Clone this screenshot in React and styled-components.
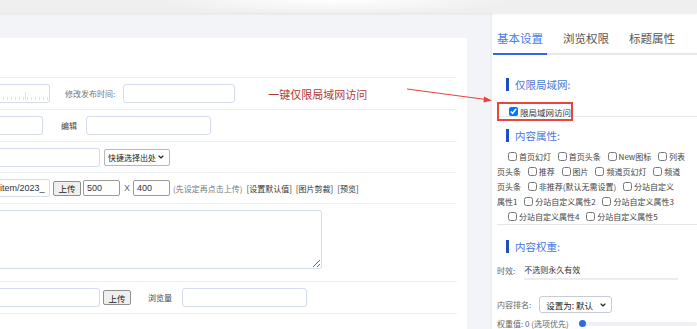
import React from "react";
import styled, { createGlobalStyle } from "styled-components";
import { ChevronDown } from "lucide-react";

const GlobalStyle = createGlobalStyle`
  html, body { margin: 0; padding: 0; }
  body {
    width: 697px;
    height: 329px;
    overflow: hidden;
    background: #f3f4f8;
    font-family: "Liberation Sans", "Noto Sans CJK SC", sans-serif;
    color: #333;
  }
`;

const Page = styled.div`
  position: relative;
  height: 329px;
  display: flex;
  flex-direction: column;
`;

const TopBar = styled.div`
  height: 13px;
  flex-shrink: 0;
  background: radial-gradient(ellipse 180px 14px at 48% 0%, #ffffff 0%, #f8f8f8 45%, #efefef 100%);
  box-shadow: 0 1px 2px rgba(0, 0, 0, 0.08);
  position: relative;
  z-index: 1;
`;

const Body = styled.div`
  display: flex;
  flex: 1;
  min-height: 0;
`;

const LeftCol = styled.div`
  width: 467px;
  flex-shrink: 0;
  padding-top: 25px;
  margin-right: 25px;
`;

const Panel = styled.div`
  background: #fff;
  height: 100%;
  padding: 39px 10px 0 0;
  box-sizing: border-box;
`;

const Row = styled.div`
  display: flex;
  align-items: ${(p) => (p.top ? "flex-start" : "center")};
  height: ${(p) => p.h}px;
  padding-top: ${(p) => (p.top ? 6 : 0)}px;
  border-top: 1px solid #eef0f4;
  border-bottom: ${(p) => (p.last ? "1px solid #eef0f4" : "none")};
  box-sizing: border-box;
`;

const Input = styled.div`
  width: ${(p) => p.w}px;
  height: ${(p) => p.h || 19}px;
  flex-shrink: 0;
  margin-left: ${(p) => p.ml || 0}px;
  border: 1px solid #d6dcee;
  border-left: ${(p) => (p.cut ? "none" : "1px solid #d6dcee")};
  border-radius: ${(p) => (p.cut ? "0 3px 3px 0" : "3px")};
  box-sizing: border-box;
  background: #fff;
  font-size: 9px;
  color: #333;
  display: flex;
  align-items: center;
  overflow: hidden;
  white-space: nowrap;
`;

const DateInput = styled(Input)`
  background-image:
    linear-gradient(#e2e6f2, #e2e6f2),
    repeating-linear-gradient(90deg, transparent 0 3px, #dfe3ef 3px 4px);
  background-size: 1px 8px, 100% 3px;
  background-position: 25px 7px, 0 12px;
  background-repeat: no-repeat, repeat-x;
`;

const NativeBox = styled.div`
  width: ${(p) => p.w}px;
  height: 16px;
  flex-shrink: 0;
  margin-left: ${(p) => p.ml || 0}px;
  border: 1px solid #9a9a9a;
  border-radius: 2px;
  box-sizing: border-box;
  font-size: 9px;
  padding-left: 3px;
  display: flex;
  align-items: center;
  background: #fff;
`;

const Button = styled.div`
  width: ${(p) => p.w}px;
  height: 15px;
  flex-shrink: 0;
  margin-left: ${(p) => p.ml || 0}px;
  border: 1px solid #8f8f8f;
  border-radius: 2px;
  box-sizing: border-box;
  background: #efefef;
  font-size: 8.5px;
  color: #222;
  display: flex;
  align-items: center;
  justify-content: center;
  font-family: "Noto Sans CJK SC", sans-serif;
`;

const Select = styled.div`
  width: ${(p) => p.w}px;
  height: 17px;
  flex-shrink: 0;
  margin-left: ${(p) => p.ml || 0}px;
  border: 1px solid ${(p) => p.bc || "#b8b8b8"};
  border-radius: ${(p) => p.r || 2}px;
  box-sizing: border-box;
  padding: 0 4px 0 ${(p) => p.pl || 3}px;
  font-size: ${(p) => p.fs || 8.5}px;
  color: #222;
  display: flex;
  align-items: center;
  justify-content: space-between;
  white-space: nowrap;
  font-family: "Noto Sans CJK SC", sans-serif;
  background: #fff;
  svg { flex-shrink: 0; }
`;

const Label = styled.span`
  margin-left: ${(p) => p.ml || 0}px;
  font-size: 8px;
  color: ${(p) => p.c || "#777"};
  font-family: "Noto Sans CJK SC", sans-serif;
  white-space: nowrap;
`;

const Note = styled.span`
  margin-left: 33px;
  font-size: 11px;
  color: #b23a3a;
  font-family: "Noto Sans CJK SC", sans-serif;
  white-space: nowrap;
`;

const Times = styled.span`
  margin: 0 3px 0 4px;
  font-size: 9px;
  color: #666;
`;

const TextArea = styled.textarea`
  width: 322px;
  height: 59px;
  border: 1px solid #d6dcee;
  border-left: none;
  border-radius: 0 3px 3px 0;
  box-sizing: border-box;
  resize: both;
  margin: 0;
  padding: 0;
  outline: none;
`;

const Side = styled.div`
  flex: 1;
  min-width: 0;
  background: #fff;
  box-shadow: -1px 0 2px rgba(0, 0, 0, 0.05);
  padding-left: 1px;
  overflow: hidden;
  font-family: "Noto Sans CJK SC", sans-serif;
`;

const Tabs = styled.div`
  display: flex;
  margin-top: 17px;
  border-bottom: 2px solid #e4e7ed;
`;

const Tab = styled.div`
  padding: 0 4px 7px;
  margin-right: 12px;
  margin-bottom: -2px;
  line-height: 16px;
  font-size: 11.5px;
  color: ${(p) => (p.active ? "#4a7ee0" : "#555")};
  border-bottom: 2px solid ${(p) => (p.active ? "#2d6be0" : "transparent")};
  white-space: nowrap;
`;

const SideInner = styled.div`
  padding-left: 4px;
`;

const Title = styled.div`
  display: flex;
  align-items: center;
  margin-top: ${(p) => p.mt}px;
  padding-left: 9px;
  height: 13px;
  font-size: 10.5px;
  color: #4a78d8;
  &::before {
    content: "";
    width: 3px;
    height: 13px;
    background: #1d4fc4;
    margin-right: 6px;
  }
`;

const LanRow = styled.div`
  margin-top: 6px;
  border-bottom: 1px solid #e8e8e8;
  height: 19px;
`;

const RedBox = styled.label`
  display: inline-flex;
  align-items: center;
  width: 76px;
  height: 19px;
  box-sizing: border-box;
  border: 2px solid #e8453c;
  padding-left: 10px;
  font-size: 8.5px;
  color: #333;
  white-space: nowrap;
`;

const Check = styled.input.attrs({ type: "checkbox" })`
  width: 9px;
  height: 9px;
  margin: 0 2px 0 ${(p) => p.ml ?? 5}px;
  vertical-align: -1px;
`;

const Attrs = styled.div`
  margin-top: 7px;
  border-bottom: 1px solid #e6e6e6;
  font-size: 8px;
  line-height: 15px;
  color: #444;
`;

const Line = styled.div`
  white-space: nowrap;
  overflow: hidden;
  padding-left: ${(p) => p.indent || 0}px;
`;

const Field = styled.div`
  display: flex;
  align-items: center;
  margin-top: ${(p) => p.mt}px;
  font-size: 8px;
  color: #666;
  white-space: nowrap;
`;

const Value = styled.div`
  width: 154px;
  margin-left: 9px;
  padding-bottom: 3px;
  border-bottom: 2px solid #ececec;
  color: #333;
  margin-top: 4px;
`;

const Slider = styled.div`
  flex: 1;
  height: 4px;
  margin-left: 13px;
  background: #eef0f5;
  border-radius: 2px;
  position: relative;
  &::before {
    content: "";
    position: absolute;
    left: -3px;
    top: -1.5px;
    width: 7px;
    height: 7px;
    border-radius: 50%;
    background: #2d6be0;
  }
`;

const Arrow = styled.svg`
  position: absolute;
  left: 400px;
  top: 82px;
  pointer-events: none;
`;

const Box = ({ label, ml }) => (
  <>
    <Check ml={ml} />
    {label}
  </>
);

export default function App() {
  return (
    <Page>
      <GlobalStyle />
      <TopBar />
      <Body>
        <LeftCol>
          <Panel>
            <Row h={32}>
              <DateInput w={50} cut />
              <Label ml={15}>修改发布时间:</Label>
              <Input w={112} ml={8} />
              <Note>一键仅限局域网访问</Note>
            </Row>
            <Row h={32}>
              <Input w={43} cut />
              <Label ml={18} c="#444">编辑</Label>
              <Input w={125} ml={9} />
            </Row>
            <Row h={31}>
              <Input w={100} cut />
              <Select w={66} ml={4} fs={8}>
                快捷选择出处
                <ChevronDown size={8} strokeWidth={3.5} />
              </Select>
            </Row>
            <Row h={31}>
              <Input w={50} h={18} cut>item/2023_</Input>
              <Button w={28} ml={3}>上传</Button>
              <NativeBox w={37} ml={2}>500</NativeBox>
              <Times>X</Times>
              <NativeBox w={37}>400</NativeBox>
              <Label ml={3}>(先设定再点击上传)</Label>
              <Label ml={4} c="#333">[设置默认值]</Label>
              <Label ml={4} c="#333">[图片剪裁]</Label>
              <Label ml={4} c="#333">[预览]</Label>
            </Row>
            <Row h={78} top>
              <TextArea />
            </Row>
            <Row h={33} last>
              <Input w={100} cut />
              <Button w={28} ml={3}>上传</Button>
              <Label ml={17} c="#444">浏览量</Label>
              <Input w={125} ml={10} />
            </Row>
          </Panel>
        </LeftCol>
        <Side>
          <Tabs>
            <Tab active>基本设置</Tab>
            <Tab>浏览权限</Tab>
            <Tab>标题属性</Tab>
          </Tabs>
          <SideInner>
            <Title mt={23}>仅限局域网:</Title>
            <LanRow>
              <RedBox>
                <Check ml={0} defaultChecked />
                限局域网访问
              </RedBox>
            </LanRow>
            <Title mt={12}>内容属性:</Title>
            <Attrs>
              <Line indent={6}>
                <Box label="首页幻灯" /> <Box label="首页头条" /> <Box label="New图标" /> <Box label="列表" />
              </Line>
              <Line>
                页头条 <Box label="推荐" /> <Box label="图片" /> <Box label="频道页幻灯" /> <Box label="频道" />
              </Line>
              <Line>
                页头条 <Box label="非推荐(默认无需设置)" /> <Box label="分站自定义" />
              </Line>
              <Line>
                属性1 <Box label="分站自定义属性2" /> <Box label="分站自定义属性3" />
              </Line>
              <Line>
                <Box label="分站自定义属性4" ml={11} /> <Box label="分站自定义属性5" />
              </Line>
            </Attrs>
            <Title mt={15}>内容权重:</Title>
            <Field mt={7}>
              时效:
              <Value>不选则永久有效</Value>
            </Field>
            <Field mt={16}>
              内容排名:
              <Select w={73} ml={8} bc="#c8ccd4" r={3} pl={6}>
                设置为: 默认
                <ChevronDown size={8} strokeWidth={3.5} />
              </Select>
            </Field>
            <Field mt={5}>
              权重值: 0 (选项优先)
              <Slider />
            </Field>
          </SideInner>
        </Side>
      </Body>
      <Arrow width="100" height="26" viewBox="0 0 100 26">
        <line x1="7" y1="7" x2="86" y2="17.5" stroke="#e8453c" strokeWidth="1.2" />
        <polygon points="92,18.5 84,14.5 83.5,20.5" fill="#e8453c" />
      </Arrow>
    </Page>
  );
}
